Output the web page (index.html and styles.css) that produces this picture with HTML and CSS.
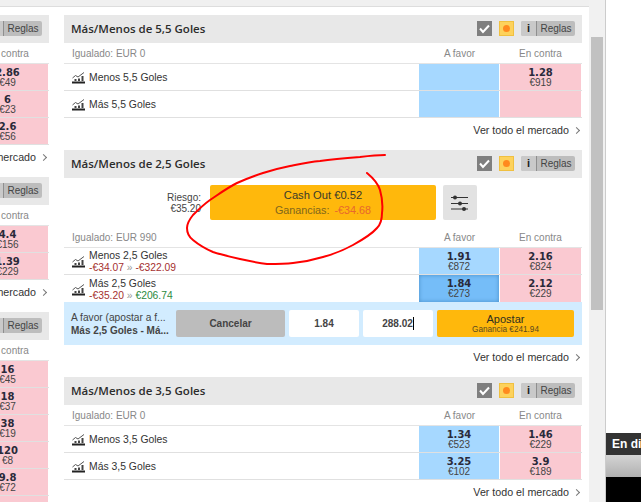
FILE: index.html
```html
<!DOCTYPE html>
<html lang="es">

<head>
    <meta charset="UTF-8">
    <title>Más/Menos Goles</title>
    <link rel="stylesheet" href="styles.css">
</head>

<body>
    <svg class="defs" width="0" height="0">
        <symbol id="chart" viewBox="0 0 13 12">
            <path d="M0.500 6 L3.500 3.500 L6 5 L12 0.500" fill="none" stroke="#555" stroke-width="1" />
            <path d="M2.500 7h2v2h-2zM6 6.500h2V9H6zM9.500 4h2v5h-2z" fill="#444" />
            <rect x="0" y="9.500" width="13" height="2" fill="#222" />
        </symbol>
        <symbol id="tick" viewBox="0 0 15 15">
            <rect width="15" height="15" fill="#7f7f7f" />
            <path d="M3 7.500 L6 11 L12 4.500" fill="none" stroke="#fff" stroke-width="2" />
        </symbol>
    </svg>

    <div class="page">
        <div class="content">
            <div class="top-strip"></div>
            <div class="columns">

                <div class="side-col">
                    <div class="market">
                        <div class="market-head">
                            <div class="head-actions">
                                <div class="rules"><span class="rules-i">i</span><span class="rules-txt">Reglas</span></div>
                            </div>
                        </div>
                        <div class="col-titles"><span class="col-title">En contra</span></div>
                        <div class="row"><div class="cell lay"><b>2.86</b><span>€49</span></div></div>
                        <div class="row"><div class="cell lay"><b>6</b><span>€23</span></div></div>
                        <div class="row"><div class="cell lay"><b>2.6</b><span>€56</span></div></div>
                        <div class="see-all">Ver todo el mercado <i class="chev"></i></div>
                    </div>
                    <div class="market">
                        <div class="market-head">
                            <div class="head-actions">
                                <div class="rules"><span class="rules-i">i</span><span class="rules-txt">Reglas</span></div>
                            </div>
                        </div>
                        <div class="col-titles"><span class="col-title">En contra</span></div>
                        <div class="row"><div class="cell lay"><b>4.4</b><span>€156</span></div></div>
                        <div class="row"><div class="cell lay"><b>1.39</b><span>€229</span></div></div>
                        <div class="see-all">Ver todo el mercado <i class="chev"></i></div>
                    </div>
                    <div class="market">
                        <div class="market-head">
                            <div class="head-actions">
                                <div class="rules"><span class="rules-i">i</span><span class="rules-txt">Reglas</span></div>
                            </div>
                        </div>
                        <div class="col-titles"><span class="col-title">En contra</span></div>
                        <div class="row"><div class="cell lay"><b>16</b><span>€45</span></div></div>
                        <div class="row"><div class="cell lay"><b>18</b><span>€37</span></div></div>
                        <div class="row"><div class="cell lay"><b>38</b><span>€19</span></div></div>
                        <div class="row"><div class="cell lay"><b>120</b><span>€8</span></div></div>
                        <div class="row"><div class="cell lay"><b>9.8</b><span>€72</span></div></div>
                        <div class="row"><div class="cell lay"></div></div>
                    </div>
                </div>

                <div class="main-col">
                    <!-- 5,5 goles -->
                    <div class="market">
                        <div class="market-head">
                            <h2>Más/Menos de 5,5 Goles</h2>
                            <div class="head-actions">
                                <svg class="tick"><use href="#tick" /></svg>
                                <span class="live-dot"></span>
                                <div class="rules"><span class="rules-i">i</span><span class="rules-txt">Reglas</span></div>
                            </div>
                        </div>
                        <div class="col-titles">
                            <span class="matched">Igualado: EUR 0</span>
                            <span class="col-title">A favor</span>
                            <span class="col-title">En contra</span>
                        </div>
                        <div class="row">
                            <div class="runner">
                                <svg class="chart"><use href="#chart" /></svg>
                                <div class="runner-name">Menos 5,5 Goles</div>
                            </div>
                            <div class="cell back"></div>
                            <div class="cell lay"><b>1.28</b><span>€919</span></div>
                        </div>
                        <div class="row">
                            <div class="runner">
                                <svg class="chart"><use href="#chart" /></svg>
                                <div class="runner-name">Más 5,5 Goles</div>
                            </div>
                            <div class="cell back"></div>
                            <div class="cell lay"></div>
                        </div>
                        <div class="see-all">Ver todo el mercado <i class="chev"></i></div>
                    </div>

                    <!-- 2,5 goles, con apuesta abierta -->
                    <div class="market">
                        <div class="market-head">
                            <h2>Más/Menos de 2,5 Goles</h2>
                            <div class="head-actions">
                                <svg class="tick"><use href="#tick" /></svg>
                                <span class="live-dot"></span>
                                <div class="rules"><span class="rules-i">i</span><span class="rules-txt">Reglas</span></div>
                            </div>
                        </div>
                        <div class="cashout">
                            <div class="risk">Riesgo:<br>€35.20</div>
                            <div class="cashout-btn">
                                <div class="cashout-title">Cash Out €0.52</div>
                                <div class="cashout-profit">Ganancias: <em>-€34.68</em></div>
                            </div>
                            <div class="cashout-opts">
                                <svg width="18" height="16" viewBox="0 0 18 16">
                                    <path d="M0 2.500h17M0 8.500h17M0 14h17" stroke="#333" stroke-width="1" />
                                    <circle cx="4" cy="2.500" r="2" fill="#333" />
                                    <circle cx="9" cy="8.500" r="2" fill="#333" />
                                    <circle cx="13" cy="14" r="2" fill="#333" />
                                </svg>
                            </div>
                        </div>
                        <div class="col-titles">
                            <span class="matched">Igualado: EUR 990</span>
                            <span class="col-title">A favor</span>
                            <span class="col-title">En contra</span>
                        </div>
                        <div class="row">
                            <div class="runner">
                                <svg class="chart"><use href="#chart" /></svg>
                                <div>
                                    <div class="runner-name">Menos 2,5 Goles</div>
                                    <div class="pnl"><span class="loss">-€34.07</span> <span class="arrow">»</span> <span class="loss">-€322.09</span></div>
                                </div>
                            </div>
                            <div class="cell back"><b>1.91</b><span>€872</span></div>
                            <div class="cell lay"><b>2.16</b><span>€824</span></div>
                        </div>
                        <div class="row row-open">
                            <div class="runner">
                                <svg class="chart"><use href="#chart" /></svg>
                                <div>
                                    <div class="runner-name">Más 2,5 Goles</div>
                                    <div class="pnl"><span class="loss">-€35.20</span> <span class="arrow">»</span> <span class="win">€206.74</span></div>
                                </div>
                            </div>
                            <div class="cell back selected"><b>1.84</b><span>€273</span></div>
                            <div class="cell lay"><b>2.12</b><span>€229</span></div>
                        </div>
                        <div class="betslip">
                            <div class="bet-info">
                                <div class="bet-type">A favor (apostar a f...</div>
                                <div class="bet-name">Más 2,5 Goles - Má...</div>
                            </div>
                            <div class="bet-cancel">Cancelar</div>
                            <div class="bet-field">1.84</div>
                            <div class="bet-field">288.02<span class="caret"></span></div>
                            <div class="bet-place">
                                <div class="bet-place-title">Apostar</div>
                                <div class="bet-place-sub">Ganancia €241.94</div>
                            </div>
                        </div>
                        <div class="see-all">Ver todo el mercado <i class="chev"></i></div>
                    </div>

                    <!-- 3,5 goles -->
                    <div class="market">
                        <div class="market-head">
                            <h2>Más/Menos de 3,5 Goles</h2>
                            <div class="head-actions">
                                <svg class="tick"><use href="#tick" /></svg>
                                <span class="live-dot"></span>
                                <div class="rules"><span class="rules-i">i</span><span class="rules-txt">Reglas</span></div>
                            </div>
                        </div>
                        <div class="col-titles">
                            <span class="matched">Igualado: EUR 0</span>
                            <span class="col-title">A favor</span>
                            <span class="col-title">En contra</span>
                        </div>
                        <div class="row">
                            <div class="runner">
                                <svg class="chart"><use href="#chart" /></svg>
                                <div class="runner-name">Menos 3,5 Goles</div>
                            </div>
                            <div class="cell back"><b>1.34</b><span>€523</span></div>
                            <div class="cell lay"><b>1.46</b><span>€229</span></div>
                        </div>
                        <div class="row">
                            <div class="runner">
                                <svg class="chart"><use href="#chart" /></svg>
                                <div class="runner-name">Más 3,5 Goles</div>
                            </div>
                            <div class="cell back"><b>3.25</b><span>€102</span></div>
                            <div class="cell lay"><b>3.9</b><span>€189</span></div>
                        </div>
                        <div class="see-all">Ver todo el mercado <i class="chev"></i></div>
                    </div>
                </div>
            </div>
        </div>

        <div class="scrollbar"><div class="scroll-thumb"></div></div>

        <div class="right-panel">
            <div class="live-title">En directo</div>
            <div class="live-bar"></div>
            <div class="live-video"></div>
        </div>

        <!-- hand drawn circle over the cash out button -->
        <svg class="scribble" width="641" height="502" viewBox="0 0 641 502">
            <path d="M385 155 C376 155 368 156 360 157 C346 158 333 159 320 161 C309 162 300 164 290 166 C280 168 272 170 263 173 C254 176 246 179 237 183 C227 188 219 194 210 200 C203 205 198 210 193 215 C189 220 187 224 187 228 C187 233 189 237 193 240 C199 245 206 249 213 252 C222 255 231 257 240 259 C249 261 258 263 267 264 C276 264 285 264 293 263 C303 262 313 260 323 257 C334 254 344 250 353 245 C362 240 371 235 377 228 C381 224 382 218 382 213 C383 205 382 197 380 190 C378 183 373 178 367 173" fill="none" stroke="#f00" stroke-width="2" stroke-linecap="round" />
        </svg>
    </div>
</body>

</html>
```

FILE: styles.css
```css
* {
    margin: 0;
    padding: 0;
    box-sizing: border-box;
}

body {
    background: #fff;
    font-family: 'Liberation Sans', Arial, sans-serif;
    font-size: 11px;
    color: #333;
}

.defs {
    position: absolute;
}

.page {
    position: relative;
    display: flex;
    width: 641px;
    height: 502px;
    overflow: hidden;
}

.content {
    width: 589px;
    flex-shrink: 0;
}

.top-strip {
    height: 7px;
    background: #f0f0f0;
    border-bottom: 1px solid #ddd;
}

.columns {
    display: flex;
    gap: 15px;
    padding-top: 8px;
}

.side-col {
    width: 49px;
    overflow: hidden;
    flex-shrink: 0;
}

.side-col .market {
    width: 82px;
    margin-left: -33px;
}

.main-col {
    width: 518px;
}

.market {
    margin-bottom: 8px;
}

.market-head {
    display: flex;
    align-items: center;
    height: 28px;
    padding: 0 7px 1px;
    background: #e8e8e8;
}

.market-head h2 {
    font-family: 'Open Sans', sans-serif;
    font-size: 11.500px;
    font-weight: 600;
    color: #2c2c2c;
}

.head-actions {
    display: flex;
    align-items: center;
    gap: 7px;
    margin-left: auto;
}

.tick {
    width: 15px;
    height: 15px;
}

.live-dot {
    display: flex;
    width: 15px;
    height: 15px;
    background: #fdd25c;
    border: 1px solid #f0c040;
}

.live-dot::after {
    content: "";
    width: 7px;
    height: 7px;
    margin: auto;
    border-radius: 50%;
    background: #ff8a1e;
}

.rules {
    display: flex;
    height: 15px;
    border-radius: 2px;
    overflow: hidden;
    background: #bdbdbd;
    line-height: 15px;
}

.rules-i {
    width: 16px;
    background: #c9c9c9;
    border-right: 1px solid #8f8f8f;
    text-align: center;
    font-weight: bold;
    color: #222;
}

.rules-txt {
    width: 38px;
    text-align: center;
    font-size: 10px;
    color: #444;
}

.col-titles {
    display: flex;
    align-items: center;
    height: 21px;
    padding-right: 1px;
    border-bottom: 1px solid #e4e4e4;
    font-size: 10px;
    color: #888;
}

.matched {
    flex: 1;
    padding-left: 8px;
}

.col-title {
    width: 81px;
    text-align: center;
}

.row {
    display: flex;
    height: 27px;
    padding-right: 1px;
    border-bottom: 1px solid #e0e0e0;
}

.row-open {
    border-bottom: 0;
}

.runner {
    display: flex;
    flex: 1;
    align-items: center;
    gap: 4px;
    padding: 2px 0 0 8px;
}

.chart {
    width: 13px;
    height: 12px;
    flex-shrink: 0;
}

.runner-name {
    font-size: 10.400px;
    line-height: 12px;
    color: #333;
}

.pnl {
    font-size: 10.300px;
    line-height: 12px;
}

.loss {
    color: #a5302f;
}

.win {
    color: #2b8a3e;
}

.arrow {
    color: #999;
}

.cell {
    display: flex;
    flex-direction: column;
    align-items: center;
    justify-content: center;
    width: 81px;
    padding-top: 1px;
    line-height: 10px;
    font-size: 10px;
    color: #444;
}

.cell b {
    font-family: 'DejaVu Sans', sans-serif;
    font-size: 10px;
    color: #2a2a3a;
}

.back {
    background: #a6d8ff;
    border-right: 1px solid #fff;
}

.lay {
    background: #fac9d1;
}

.selected {
    background: #75bdf8;
    box-shadow: inset 0 0 4px #4a8fc8;
}

.see-all {
    display: flex;
    align-items: center;
    justify-content: flex-end;
    height: 24px;
    padding-right: 1px;
    white-space: nowrap;
    font-size: 10.700px;
    color: #333;
}

.chev {
    flex-shrink: 0;
    width: 5px;
    height: 5px;
    margin: 0 2px 0 5px;
    border-top: 1px solid #777;
    border-right: 1px solid #777;
    transform: rotate(45deg);
}

/* cash out */
.cashout {
    display: flex;
    align-items: flex-start;
    justify-content: flex-end;
    height: 49px;
    padding: 7px 105px 0 0;
}

.risk {
    margin-right: 9px;
    padding-top: 7px;
    text-align: right;
    line-height: 11px;
    font-size: 10px;
    color: #444;
}

.cashout-btn {
    width: 226px;
    height: 35px;
    padding-top: 3px;
    background: #ffb80c;
    border-radius: 2px;
    text-align: center;
}

.cashout-title {
    font-size: 11.200px;
    line-height: 15px;
    color: #3a3a2a;
}

.cashout-profit {
    font-size: 10.800px;
    line-height: 14px;
    color: #80661c;
}

.cashout-profit em {
    font-style: normal;
    color: #e8672e;
    margin-left: 2px;
}

.cashout-opts {
    display: flex;
    align-items: center;
    justify-content: center;
    width: 34px;
    height: 35px;
    margin-left: 7px;
    background: #e2e2e2;
    border-radius: 2px;
}

/* betslip under the selected price */
.betslip {
    display: flex;
    align-items: center;
    gap: 4px;
    height: 43px;
    padding: 0 8px 0 7px;
    background: #d2ecff;
}

.bet-info {
    width: 100px;
    margin-right: 1px;
    line-height: 13px;
    font-size: 10.200px;
    white-space: nowrap;
}

.bet-type {
    color: #444;
}

.bet-name {
    font-size: 10px;
    font-weight: bold;
    color: #444;
}

.bet-cancel {
    width: 109px;
    height: 27px;
    line-height: 27px;
    background: #bcbcbc;
    border-radius: 2px;
    text-align: center;
    font-size: 10px;
    font-weight: bold;
    color: #444;
}

.bet-field {
    width: 70px;
    height: 27px;
    line-height: 27px;
    background: #fff;
    border-radius: 2px;
    text-align: center;
    font-size: 10px;
    font-weight: bold;
    color: #444;
}

.caret {
    display: inline-block;
    width: 1px;
    height: 13px;
    vertical-align: -3px;
    background: #000;
}

.bet-place {
    width: 137px;
    height: 27px;
    padding-top: 3px;
    background: #ffb80c;
    border-radius: 2px;
    text-align: center;
}

.bet-place-title {
    line-height: 12px;
    font-size: 11px;
    color: #2e2e20;
}

.bet-place-sub {
    line-height: 9px;
    font-size: 8.200px;
    color: #5a4a20;
}

/* page scrollbar and the panel beside it */
.scrollbar {
    width: 16px;
    flex-shrink: 0;
    background: #f1f1f1;
}

.scroll-thumb {
    height: 273px;
    margin: 37px 2px 0;
    background: #c1c1c1;
}

.right-panel {
    display: flex;
    flex: 1;
    flex-direction: column;
    justify-content: flex-end;
    min-width: 0;
    border-left: 1px solid #ccc;
}

.live-title {
    height: 22px;
    padding-left: 6px;
    line-height: 22px;
    white-space: nowrap;
    background: #333;
    font-size: 12px;
    font-weight: bold;
    color: #fff;
}

.live-bar {
    height: 22px;
    background: linear-gradient(#d4d4d4, #b0b0b0);
}

.live-video {
    height: 25px;
    background: #000;
}

.scribble {
    position: absolute;
    top: 0;
    left: 0;
    pointer-events: none;
}
```
